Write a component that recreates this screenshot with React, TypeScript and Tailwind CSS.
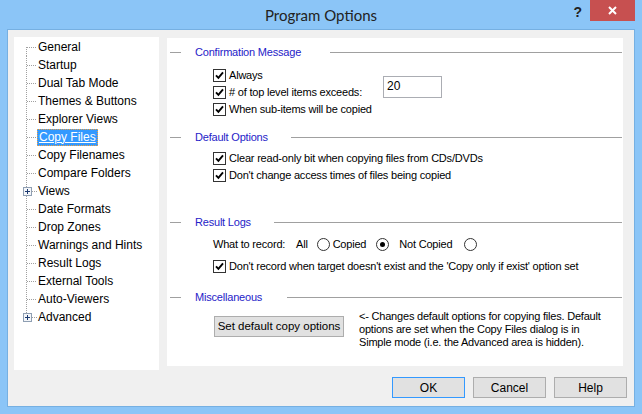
import React from "react";

const treeItems = [
  { label: "General" },
  { label: "Startup" },
  { label: "Dual Tab Mode" },
  { label: "Themes & Buttons" },
  { label: "Explorer Views" },
  { label: "Copy Files", selected: true },
  { label: "Copy Filenames" },
  { label: "Compare Folders" },
  { label: "Views", plus: true },
  { label: "Date Formats" },
  { label: "Drop Zones" },
  { label: "Warnings and Hints" },
  { label: "Result Logs" },
  { label: "External Tools" },
  { label: "Auto-Viewers" },
  { label: "Advanced", plus: true },
];

const TreeLines = ({ first, last, plus }: { first?: boolean; last?: boolean; plus?: boolean }) => (
  <svg width="24" height="18" className="shrink-0" shapeRendering="crispEdges">
    <line x1="12.5" y1={first ? 9 : 0} x2="12.5" y2={last ? 9 : 18} stroke="#a0a0a0" strokeDasharray="1 1" />
    <line x1={plus ? 18 : 13} y1="9.5" x2="23" y2="9.5" stroke="#a0a0a0" strokeDasharray="1 1" />
    {plus && (
      <g>
        <rect x="9.5" y="5.5" width="8" height="8" fill="#f4f6f9" stroke="#8f9fb3" />
        <line x1="11" y1="9.5" x2="16" y2="9.5" stroke="#1c3a70" />
        <line x1="13.5" y1="7" x2="13.5" y2="12" stroke="#1c3a70" />
      </g>
    )}
  </svg>
);

const CheckBox = ({ checked = true }: { checked?: boolean }) => (
  <span className="w-[13px] h-[13px] border border-[#333] bg-white flex items-center justify-center shrink-0">
    {checked && (
      <svg width="9" height="9" viewBox="0 0 9 9">
        <path d="M1 4.3 L3.4 6.8 L8 1.3" stroke="#000" strokeWidth="1.9" fill="none" />
      </svg>
    )}
  </span>
);

const Radio = ({ checked }: { checked?: boolean }) => (
  <span className="w-[13px] h-[13px] rounded-full border border-[#333] bg-white flex items-center justify-center shrink-0">
    {checked && <span className="w-[5px] h-[5px] rounded-full bg-black" />}
  </span>
);

const CheckRow = ({ label }: { label: string }) => (
  <div className="h-[17px] flex items-center">
    <CheckBox />
    <span className="ml-[3px] whitespace-nowrap">{label}</span>
  </div>
);

const Header = ({ title, gap }: { title: string; gap: string }) => (
  <div className="h-[14px] flex items-center">
    <div className="ml-[3px] w-[11px] h-px bg-[#a0a0a0]" />
    <span className="ml-[14px] text-[#1f22c8] whitespace-nowrap">{title}</span>
    <div className={`${gap} mr-px flex-1 h-px bg-[#a0a0a0]`} />
  </div>
);

const DialogButton = ({ label, focused }: { label: string; focused?: boolean }) => (
  <button
    className={
      "w-[73px] h-[21px] bg-[#e1e1e1] text-[12px] text-black border " +
      (focused ? "border-[#3399ff]" : "border-[#adadad]")
    }
  >
    {label}
  </button>
);

export default function App() {
  return (
    <div className="w-[642px] h-[414px] bg-[#8bc5f7] flex flex-col font-['Liberation_Sans',Arial,sans-serif] text-black select-none">
      {/* title bar */}
      <div className="relative h-[29px] flex items-center justify-center">
        <span className="text-[15px] text-[#222] pt-[2px] font-['Lato','Liberation_Sans',sans-serif]">Program Options</span>
        <div className="absolute right-[7px] top-0 flex items-start">
          <span className="mr-[8px] mt-[5px] text-[14px] font-bold text-[#222] leading-[14px]">?</span>
          <div className="w-[45px] h-[21px] bg-[#c75050] flex items-center justify-center">
            <svg width="9" height="9" viewBox="0 0 9 9">
              <path d="M1 1 L8 8 M8 1 L1 8" stroke="#fff" strokeWidth="2" />
            </svg>
          </div>
        </div>
      </div>

      {/* client */}
      <div className="mx-[7px] h-[378px] bg-[#f0f0f0] border border-[#76b0e2] flex flex-col">
        <div className="pt-[7px] pl-[6px] flex items-start">
          {/* tree */}
          <div className="w-[145px] h-[333px] bg-white pt-[1px] text-[12px]">
            {treeItems.map((item, i) => (
              <div key={item.label} className="h-[18px] flex items-center">
                <TreeLines first={i === 0} last={i === treeItems.length - 1} plus={item.plus} />
                {item.selected ? (
                  <span className="h-[17px] leading-[15px] px-px bg-[#3399ff] text-white underline border border-dotted border-[#f0a040] -ml-px whitespace-nowrap">
                    {item.label}
                  </span>
                ) : (
                  <span className="leading-[18px] whitespace-nowrap">{item.label}</span>
                )}
              </div>
            ))}
          </div>

          {/* options panel */}
          <div className="ml-[8px] mt-[1px] w-[456px] h-[328px] bg-white pt-[7px] text-[11px] tracking-[-0.2px] flex flex-col">
            <div>
              <Header title="Confirmation Message" gap="ml-[29px]" />
              <div className="flex items-start pl-[46px] mt-[8px]">
                <div className="w-[170px]">
                  <CheckRow label="Always" />
                  <CheckRow label="# of top level items exceeds:" />
                  <CheckRow label="When sub-items will be copied" />
                </div>
                <div className="mt-[9px] w-[59px] h-[22px] border border-[#abadb3] bg-white text-[12px] tracking-normal pl-[3px] leading-[18px]">
                  20
                </div>
              </div>
            </div>

            <div className="mt-[12px]">
              <Header title="Default Options" gap="ml-[23px]" />
              <div className="pl-[46px] mt-[6px]">
                <CheckRow label="Clear read-only bit when copying files from CDs/DVDs" />
                <CheckRow label="Don't change access times of files being copied" />
              </div>
            </div>

            <div className="mt-[31px]">
              <Header title="Result Logs" gap="ml-[23px]" />
              <div className="pl-[46px] mt-[7px]">
                <div className="h-[17px] flex items-center whitespace-nowrap">
                  <span className="w-[83px]">What to record:</span>
                  <span>All</span>
                  <span className="ml-[9px]"><Radio /></span>
                  <span className="ml-[3px]">Copied</span>
                  <span className="ml-[10px]"><Radio checked /></span>
                  <span className="ml-[10px]">Not Copied</span>
                  <span className="ml-[12px]"><Radio /></span>
                </div>
                <div className="mt-[5px]">
                  <CheckRow label="Don't record when target doesn't exist and the 'Copy only if exist' option set" />
                </div>
              </div>
            </div>

            <div className="mt-[15px]">
              <Header title="Miscellaneous" gap="ml-[25px]" />
              <div className="flex items-start pl-[47px] mt-[6px]">
                <button className="mt-[6px] w-[130px] h-[21px] bg-[#e1e1e1] border border-[#adadad] text-[11.5px] tracking-normal text-black">
                  Set default copy options
                </button>
                <p className="ml-[15px] leading-[13px] whitespace-nowrap">
                  &lt;- Changes default options for copying files. Default
                  <br />
                  options are set when the Copy Files dialog is in
                  <br />
                  Simple mode (i.e. the Advanced area is hidden).
                </p>
              </div>
            </div>
          </div>
        </div>

        {/* buttons */}
        <div className="mt-[7px] flex justify-end gap-[8px] pr-[7px]">
          <DialogButton label="OK" focused />
          <DialogButton label="Cancel" />
          <DialogButton label="Help" />
        </div>
      </div>
    </div>
  );
}
